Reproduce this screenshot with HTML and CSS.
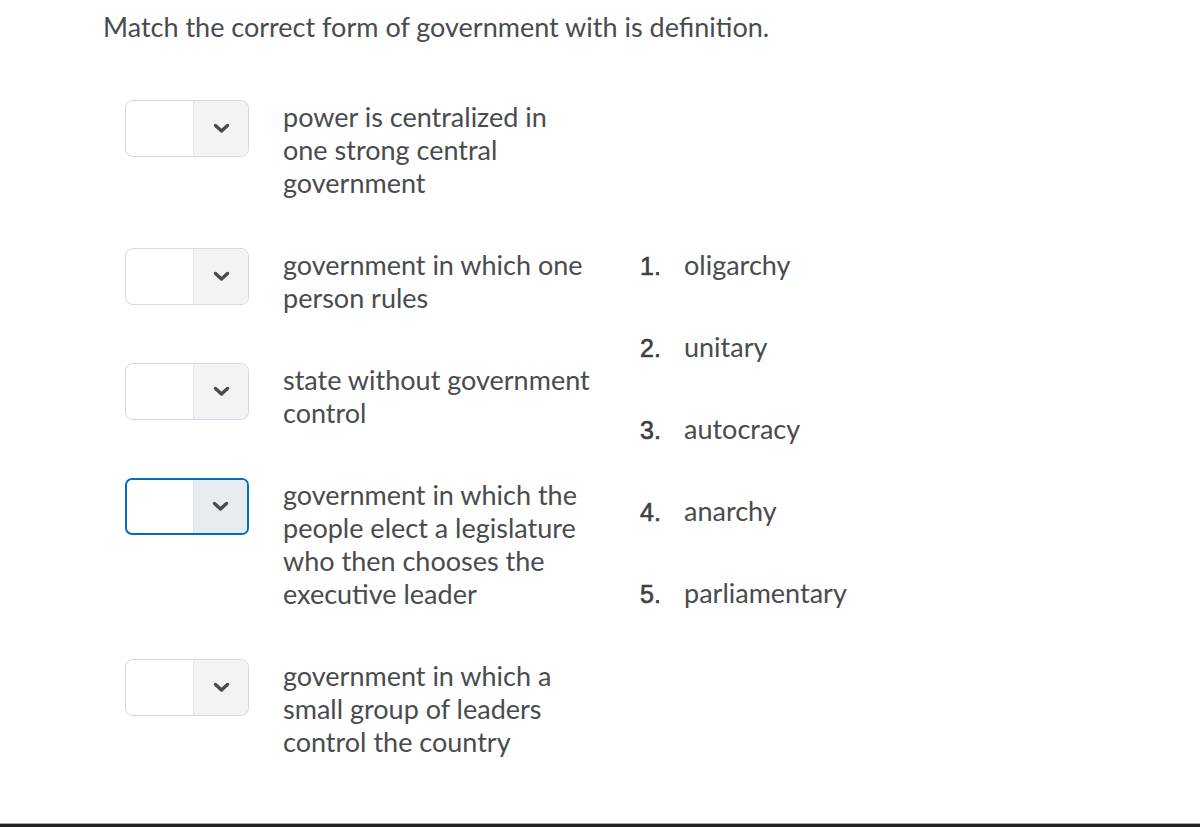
FILE: index.html
```html
<!DOCTYPE html>
<html lang="en">
<head>
<meta charset="utf-8">
<title>Matching question</title>
<link rel="stylesheet" href="styles.css">
</head>
<body>
<div class="page">
  <main class="question">
    <h1 class="prompt">Match the correct form of government with is definition.</h1>
    <div class="matching">
      <div class="defs">
        <div class="row">
          <div class="select"><span class="field"></span><span class="btn"><svg width="17" height="11" viewBox="0 0 17 11"><polyline points="2.5,2.5 8.5,8 14.5,2.5" fill="none" stroke="#494c4e" stroke-width="3.4" stroke-linecap="round" stroke-linejoin="round"/></svg></span></div>
          <p class="def">power is centralized in one strong central government</p>
        </div>
        <div class="row">
          <div class="select"><span class="field"></span><span class="btn"><svg width="17" height="11" viewBox="0 0 17 11"><polyline points="2.5,2.5 8.5,8 14.5,2.5" fill="none" stroke="#494c4e" stroke-width="3.4" stroke-linecap="round" stroke-linejoin="round"/></svg></span></div>
          <p class="def">government in which one person rules</p>
        </div>
        <div class="row">
          <div class="select"><span class="field"></span><span class="btn"><svg width="17" height="11" viewBox="0 0 17 11"><polyline points="2.5,2.5 8.5,8 14.5,2.5" fill="none" stroke="#494c4e" stroke-width="3.4" stroke-linecap="round" stroke-linejoin="round"/></svg></span></div>
          <p class="def">state without government control</p>
        </div>
        <div class="row">
          <div class="select focused"><span class="field"></span><span class="btn"><svg width="17" height="11" viewBox="0 0 17 11"><polyline points="2.5,2.5 8.5,8 14.5,2.5" fill="none" stroke="#494c4e" stroke-width="3.4" stroke-linecap="round" stroke-linejoin="round"/></svg></span></div>
          <p class="def">government in which the people elect a legislature who then chooses the executive leader</p>
        </div>
        <div class="row">
          <div class="select"><span class="field"></span><span class="btn"><svg width="17" height="11" viewBox="0 0 17 11"><polyline points="2.5,2.5 8.5,8 14.5,2.5" fill="none" stroke="#494c4e" stroke-width="3.4" stroke-linecap="round" stroke-linejoin="round"/></svg></span></div>
          <p class="def">government in which a small group of leaders control the country</p>
        </div>
      </div>
      <ol class="choices">
        <li><span class="num">1.</span><span>oligarchy</span></li>
        <li><span class="num">2.</span><span>unitary</span></li>
        <li><span class="num">3.</span><span>autocracy</span></li>
        <li><span class="num">4.</span><span>anarchy</span></li>
        <li><span class="num">5.</span><span>parliamentary</span></li>
      </ol>
    </div>
  </main>
  <div class="bottom-rule"></div>
</div>
</body>
</html>
```

FILE: styles.css
```css
html, body {
  margin: 0;
  padding: 0;
  background: #ffffff;
}
body {
  font-family: Lato, "Open Sans", sans-serif;
  color: #494c4e;
}
.page {
  min-height: 827px;
  display: flex;
  flex-direction: column;
  box-sizing: border-box;
}
.question {
  flex: 1;
  padding: 10px 0 0 103px;
}
.prompt {
  margin: 0;
  font-size: 27px;
  line-height: 33px;
  font-weight: 400;
}
.matching {
  display: flex;
  margin-top: 57px;
  padding-left: 22px;
}
.defs {
  display: flex;
  flex-direction: column;
  gap: 49px;
  width: 468px;
}
.row {
  display: flex;
  align-items: flex-start;
  gap: 34px;
}
.select {
  flex: none;
  display: flex;
  width: 124px;
  height: 57px;
  box-sizing: border-box;
  border: 1px solid #d3d9e3;
  border-radius: 8px;
  overflow: hidden;
  background: #fff;
}
.field {
  width: 67px;
  flex: none;
}
.btn {
  flex: 1;
  display: flex;
  align-items: center;
  justify-content: center;
  background: #f1f3f5;
  border-left: 1px solid #e3e6ea;
}
.select.focused {
  border: 2.5px solid #006fbf;
  border-radius: 7px;
}
.select.focused .field {
  width: 65.5px;
}
.select.focused .btn {
  background: #e8ebf0;
}
.def {
  margin: 0;
  width: 310px;
  font-size: 27px;
  line-height: 33px;
}
.choices {
  list-style: none;
  margin: 148px 0 0 0;
  padding: 0 0 0 47px;
  display: flex;
  flex-direction: column;
  gap: 49px;
  font-size: 27px;
  line-height: 33px;
}
.choices li {
  display: flex;
}
.num {
  width: 44px;
  flex: none;
  font-family: "Liberation Sans", Arial, sans-serif;
  font-size: 25px;
  color: #3c3f41;
  -webkit-text-stroke: 0.6px #3c3f41;
  position: relative;
  top: 2px;
}
.bottom-rule {
  height: 3px;
  background: #222;
  border-top: 1px solid #a9a9a9;
}
```
